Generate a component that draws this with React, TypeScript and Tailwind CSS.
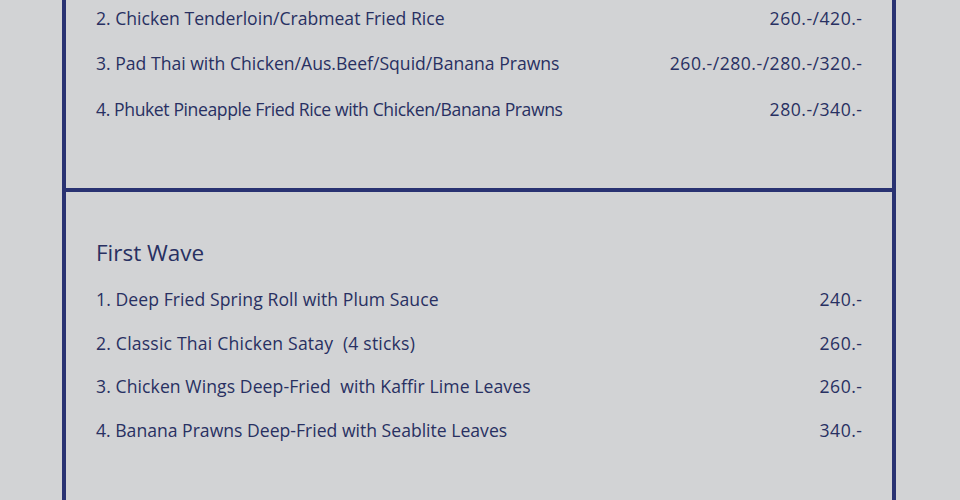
export default function App() {
  const top: [string, string, string][] = [
    ["2. Chicken Tenderloin/Crabmeat Fried Rice", "260.-/420.-", "tracking-normal"],
    ["3. Pad Thai with Chicken/Aus.Beef/Squid/Banana Prawns", "260.-/280.-/280.-/320.-", "tracking-normal"],
    ["4. Phuket Pineapple Fried Rice with Chicken/Banana Prawns", "280.-/340.-", "tracking-[-0.4px]"],
  ];
  const wave: [string, string, string][] = [
    ["1. Deep Fried Spring Roll with Plum Sauce", "240.-", "tracking-[0.07px]"],
    ["2. Classic Thai Chicken Satay\u00a0 (4 sticks)", "260.-", "tracking-[0.2px]"],
    ["3. Chicken Wings Deep-Fried\u00a0 with Kaffir Lime Leaves", "260.-", "tracking-[0.08px]"],
    ["4. Banana Prawns Deep-Fried with Seablite Leaves", "340.-", "tracking-normal"],
  ];
  return (
    <div
      className="w-[960px] h-[500px] overflow-hidden bg-[#d2d3d5] text-[#283062]"
      style={{ fontFamily: '"Open Sans", "Noto Sans", sans-serif' }}
    >
      <div className="ml-[62px] w-[834px] border-x-4 border-[#293272]">
        <div className="mt-[-5px] pb-[56px] px-[30px] border-b-4 border-[#293272]">
          {top.map(([n, p, t]) => (
            <div key={n} className="h-[45.5px] flex items-center justify-between text-[17.6px]">
              <span className={t}>{n}</span>
              <span className="tracking-[0.5px] mr-[-0.5px]">{p}</span>
            </div>
          ))}
        </div>
        <div className="pt-[41px] px-[30px] pb-[60px]">
          <div className="h-[40px] flex items-center text-[22.5px]">First Wave</div>
          <div className="mt-[5px]">
            {wave.map(([n, p, t]) => (
              <div key={n} className="h-[43.5px] flex items-center justify-between text-[17.6px]">
                <span className={t}>{n}</span>
                <span className="tracking-[0.5px] mr-[-0.5px]">{p}</span>
              </div>
            ))}
          </div>
        </div>
      </div>
    </div>
  );
}
